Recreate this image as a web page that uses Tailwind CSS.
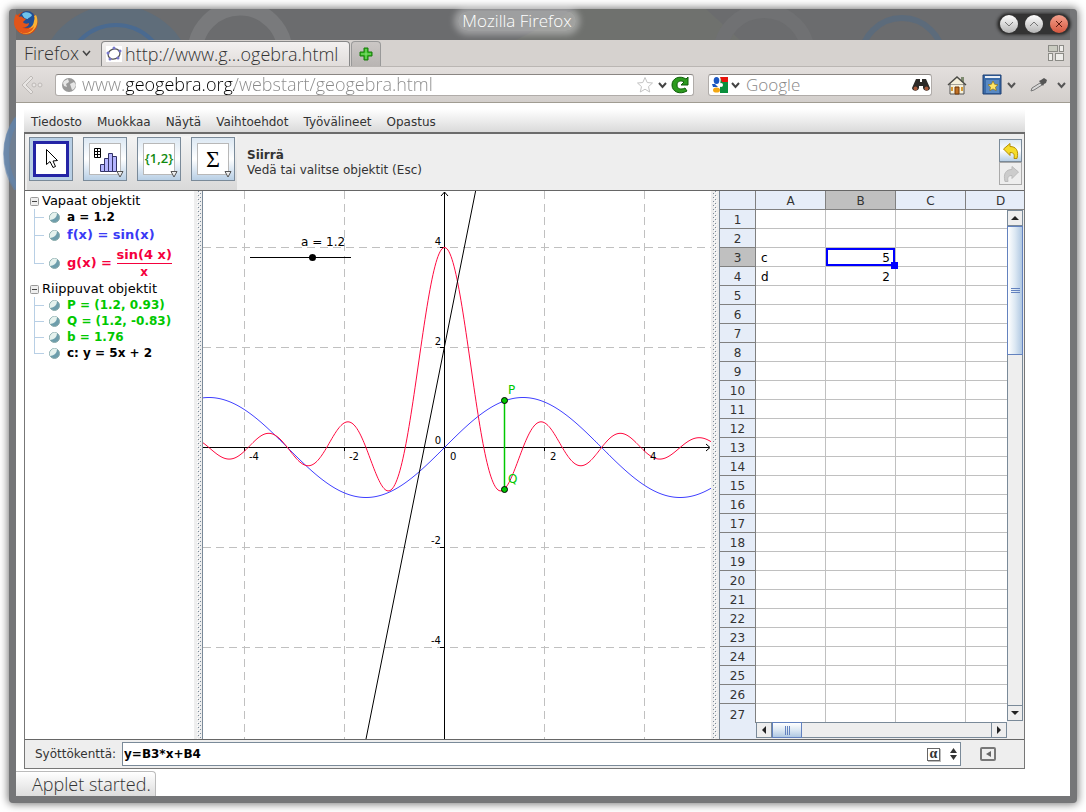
<!DOCTYPE html>
<html lang="fi">
<head>
  <meta charset="UTF-8" />
  <meta name="viewport" content="width=device-width, initial-scale=1.0" />
  <title>Mozilla Firefox</title>
  <script src="https://cdn.jsdelivr.net/npm/@tailwindcss/browser@4"></script>
</head>
<body class="bg-white h-screen p-[9px] overflow-hidden text-[#333] font-['DejaVu_Sans',sans-serif] text-[12px]">

  <div class="relative h-full flex flex-col rounded-[4px] bg-[#757678] px-[7px] pb-[7px] shadow-[0_0_8px_1px_rgba(0,0,0,0.55)]">
    <!-- Desktop ring showing through the window edge -->
    <svg class="absolute -left-[9px] top-[101px] w-4 h-20" viewBox="0 0 16 80"><path d="M16 6A62 62 0 0 0 16 80z" fill="#6f8298" opacity=".8"/><path d="M17 9A62 62 0 0 0 17 79" fill="none" stroke="#5e84b0" stroke-width="6" opacity=".6"/></svg>

    <!-- Title bar -->
    <header class="relative h-[31px] shrink-0 flex items-center justify-center pr-[52px]">
      <svg class="absolute inset-0 w-full h-full" viewBox="0 0 1054 31" preserveAspectRatio="xMinYMin slice" fill="none">
        <rect width="1054" height="31" fill="#6b6c6e"/>
        <circle cx="100" cy="74" r="78" fill="#5f6d7a"/>
        <circle cx="100" cy="66" r="50" stroke="#4a6a90" stroke-width="4"/>
        <circle cx="224" cy="44" r="45" stroke="#797a7c" stroke-width="15"/>
        <path d="M560 0h130l34 31H500z" fill="#6f716e"/>
        <circle cx="748" cy="46" r="44" stroke="#707173" stroke-width="14"/>
        <circle cx="886" cy="50" r="41" stroke="#5c6b7b" stroke-width="6"/>
      </svg>
      <!-- Firefox logo -->
      <svg class="absolute left-[-4px] top-0 w-7 h-7" viewBox="0 0 28 28">
        <circle cx="14" cy="14" r="11.500" fill="#d9480f"/>
        <circle cx="15" cy="10.500" r="8.500" fill="#1f4f96"/>
        <path d="M10 5c3-3 8-2 10 1-1 3-4 2-4 4-3 0-5-2-6-5z" fill="#6fc3ec"/>
        <path d="M24 6c3 6 1 14-6 18-5 2-10 0-12-3 7 2 15-1 16-9 .5-2 .8-3 0-5z" fill="#f9b233"/>
        <path d="M4 5l3 3c2-1 4 0 4 1l3 1-3 3c1 2 4 2 6 1 0 4-5 5-7 4 3 3 9 3 12-1-1 6-8 9-14 6C1 20 1 11 4 5z" fill="#e2551a"/>
      </svg>
      <h1 class="relative mb-2 rounded-full bg-white/35 px-1 text-[17px] leading-[20px] text-white font-light font-['Open_Sans',sans-serif] shadow-[0_0_6px_4px_rgba(255,255,255,0.35)]">Mozilla Firefox</h1>
      <div class="absolute right-0 top-[5px] flex gap-[7px] rounded-full bg-[#333] px-[2px] py-px shadow-[0_0_3px_1px_#333]">
        <button aria-label="Pienennä" class="w-[18px] h-[18px] rounded-full bg-linear-to-b from-white to-[#b5b5b5] flex items-center justify-center"><svg class="w-3 h-3" viewBox="0 0 12 12" fill="none" stroke="#777"><path d="M2 4l4 4 4-4"/></svg></button>
        <button aria-label="Suurenna" class="w-[18px] h-[18px] rounded-full bg-linear-to-b from-white to-[#b5b5b5] flex items-center justify-center"><svg class="w-3 h-3" viewBox="0 0 12 12" fill="none" stroke="#777"><path d="M2 8l4-4 4 4"/></svg></button>
        <button aria-label="Sulje" class="w-[18px] h-[18px] rounded-full bg-linear-to-b from-[#f3a08d] to-[#d4563e] flex items-center justify-center"><svg class="w-3 h-3" viewBox="0 0 12 12" fill="none" stroke="#5a1a10"><path d="M3 3l6 6M9 3l-6 6"/></svg></button>
      </div>
    </header>

    <!-- Tab strip -->
    <div class="relative h-[27px] shrink-0 flex items-end bg-[#d6d2cf] border-b border-[#bab6b3] text-[18px] text-[#333] font-light font-['Open_Sans',sans-serif]">
      <button class="w-[85px] h-[26px] pl-2 flex items-center gap-[3px]">Firefox
        <svg class="w-[9px] h-2" viewBox="0 0 9 8" fill="none" stroke="#444" stroke-width="1.500"><path d="M1 2l3.500 4L8 2"/></svg>
      </button>
      <button class="w-[249px] h-[25px] mr-px pl-1 flex items-center gap-[3px] rounded-t-[4px] border border-b-0 border-[#888] bg-linear-to-b from-[#f3f1f0] to-[#e1dddb] whitespace-nowrap overflow-hidden">
        <svg class="w-4 h-4 shrink-0 bg-white" viewBox="0 0 16 16" fill="none"><ellipse cx="8" cy="8" rx="6" ry="5" stroke="#555" stroke-width="1.300" transform="rotate(-20 8 8)"/><g fill="#77c"><circle cx="8" cy="2" r="1.500"/><circle cx="14" cy="5" r="1.500"/><circle cx="12" cy="12" r="1.500"/><circle cx="4" cy="13" r="1.500"/><circle cx="2" cy="7" r="1.500"/></g></svg>
        http://www.g…ogebra.html
      </button>
      <button aria-label="Uusi välilehti" class="w-[30px] h-[25px] flex items-center justify-center rounded-t-[4px] border border-b-0 border-[#999] bg-linear-to-b from-[#cbc7c5] to-[#b9b5b3]">
        <svg class="w-4 h-4" viewBox="0 0 16 16"><path d="M6 2h4v4h4v4h-4v4H6v-4H2V6h4z" fill="#33b81e" stroke="#187a0c"/><path d="M8 3v10M3 8h10" stroke="#8be07c"/></svg>
      </button>
      <button aria-label="Ryhmittele välilehdet" class="ml-auto mr-[5px] self-center">
        <svg class="w-[18px] h-[18px]" viewBox="0 0 18 18" fill="#eeedea" stroke="#8b8b86"><rect x="1.500" y="1.500" width="9" height="6" fill="#c9cbc0"/><rect x="12.500" y="1.500" width="4" height="6"/><rect x="1.500" y="9.500" width="4" height="7"/><rect x="8.500" y="9.500" width="8" height="7"/></svg>
      </button>
    </div>

    <!-- Navigation bar -->
    <nav class="relative h-[36px] shrink-0 flex items-center bg-linear-to-b from-[#e3dfdd] to-[#d3cfcc] border-b border-[#a09c92] font-light font-['Open_Sans',sans-serif]">
      <button aria-label="Takaisin" class="w-[39px] pl-[5px]">
        <svg class="w-6 h-5" viewBox="0 0 24 20" fill="#e8e5e3" stroke="#bdb9b6"><path d="M10 1L1 10l9 9 2-2-7-7 7-7z"/><circle cx="13" cy="10" r="2"/><circle cx="19" cy="10" r="2"/></svg>
      </button>
      <div class="flex-1 h-[22px] flex items-center rounded-[3px] border border-[#b0aca9] border-t-[#8a8683] bg-white px-1">
        <svg class="w-4 h-4 mx-px shrink-0" viewBox="0 0 16 16"><circle cx="8" cy="8" r="7" fill="#999"/><path d="M3 4l4-2 1 3-3 2 1 3-3-1-1-3zM9 7l4-2 2 3-2 4-2 1-1-3z" fill="#e6e6e6"/></svg>
        <input type="text" aria-label="Osoite" value="www.geogebra.org/webstart/geogebra.html" class="flex-1 min-w-0 ml-1 h-5 outline-none text-[18px] text-transparent bg-clip-text bg-[linear-gradient(to_right,#888_0_44px,#000_44px_152px,#888_152px)]" />
        <button aria-label="Lisää kirjanmerkki"><svg class="w-[18px] h-[18px]" viewBox="0 0 18 18" fill="none" stroke="#c4c4c4"><path d="M9 1.500l2.200 5 5.300.5-4 3.600 1.200 5.400L9 13.200 4.300 16l1.200-5.400-4-3.600 5.300-.5z"/></svg></button>
        <button aria-label="Historia" class="px-[4px]"><svg class="w-[9px] h-2" viewBox="0 0 9 8" fill="none" stroke="#444" stroke-width="2"><path d="M1 2l3.500 4L8 2"/></svg></button>
        <button aria-label="Päivitä"><svg class="w-[18px] h-[18px]" viewBox="0 0 18 18"><path d="M17 1v8h-7l3-3C10 4 6 5 6 9c0 4 4 5 8 3l2 3C9 19 1 16 1 9 1 2 9-1 15 3z" fill="#2c9a1e" stroke="#0f5c0a"/></svg></button>
      </div>
      <div class="w-[224px] h-[22px] ml-[14px] flex items-center rounded-[3px] border border-[#b0aca9] border-t-[#8a8683] bg-white pl-[3px] pr-px">
        <svg class="w-4 h-4 shrink-0" viewBox="0 0 16 16"><path d="M9 0h7v16H8V9z" fill="#0a8f3c"/><path d="M8 0h8v5H10z" fill="#e8130c"/><circle cx="9" cy="8" r="2" fill="#fff"/><ellipse cx="4.500" cy="3.500" rx="2.800" ry="3.500" fill="#1c56c0"/><path d="M0 7h3l3 3H1z" fill="#1c56c0"/><ellipse cx="4.500" cy="13" rx="3.500" ry="2.600" fill="#f3a712"/></svg>
        <button aria-label="Hakukone" class="px-[3px]"><svg class="w-[9px] h-2" viewBox="0 0 9 8" fill="none" stroke="#444" stroke-width="2"><path d="M1 2l3.500 4L8 2"/></svg></button>
        <input type="text" aria-label="Haku" placeholder="Google" class="flex-1 min-w-0 ml-[3px] h-5 outline-none text-[17px] placeholder:text-[#888]" />
        <button aria-label="Hae"><svg class="w-[18px] h-4" viewBox="0 0 18 16"><path d="M4 2h4v3h2V2h4l4 9c0 3-6 4-7 0V9H7v2c-1 4-7 3-7 0z" fill="#2c2a28"/><circle cx="3.500" cy="11.500" r="2" fill="#a5583a"/><circle cx="14.500" cy="11.500" r="2" fill="#a5583a"/></svg></button>
      </div>
      <div class="w-[138px] flex items-center pl-[15px]">
        <button aria-label="Koti"><svg class="w-5 h-5" viewBox="0 0 20 20"><path d="M14 2h3v5h-3z" fill="#7e8a70"/><path d="M3 9h14v10H3z" fill="#f5f0da" stroke="#555"/><path d="M3 9l7-6 7 6z" fill="#f5f0da"/><path d="M1 10l9-8 9 8" fill="none" stroke="#4b4b46" stroke-width="1.500"/><path d="M8 12h4v7H8z" fill="#c07023" stroke="#713b0c"/><path d="M4 12h2v4H4zM14 12h2v4h-2z" fill="#d89b35"/></svg></button>
        <button aria-label="Kirjanmerkit" class="flex items-center gap-[5px] ml-[15px]"><svg class="w-5 h-[21px]" viewBox="0 0 20 21"><path d="M1 1h18v19H1z" fill="#3a6ba8" stroke="#1c3f73"/><path d="M3 2h15v2H3z" fill="#e9eef5"/><path d="M4 6h13v13H4z" fill="#5a8ac4"/><path d="M11 7l1.600 3.300 3.400.4-2.500 2.400.7 3.500-3.200-1.700-3.200 1.700.7-3.500L6 10.700l3.400-.4z" fill="#ffe566" stroke="#8a6a00" stroke-width=".6"/></svg>
          <svg class="w-[9px] h-2" viewBox="0 0 9 8" fill="none" stroke="#555" stroke-width="2"><path d="M1 2l3.500 4L8 2"/></svg></button>
        <button aria-label="Pipetti" class="flex items-center gap-[9px] ml-[14px]"><svg class="w-[18px] h-[18px]" viewBox="0 0 18 18"><path d="M1 15l1-3 8-5 2 2-8 5z" fill="#d8d8d8" stroke="#777"/><path d="M9 5l2-1 3-2 3 2-1 3-2 1-1 2z" fill="#555"/></svg>
          <svg class="w-[9px] h-2" viewBox="0 0 9 8" fill="none" stroke="#555" stroke-width="2"><path d="M1 2l3.500 4L8 2"/></svg></button>
      </div>
    </nav>

    <!-- Page -->
    <main class="relative flex-1 min-h-0 flex flex-col bg-white pt-[6px]">
      <div class="flex-1 min-h-0 flex flex-col ml-2 mr-[45px]">

        <!-- GeoGebra menu -->
        <div class="h-[25px] shrink-0 flex items-center gap-[15px] pl-[7px] pt-[2px] bg-linear-to-b from-white to-[#dadada] border-b-2 border-[#6b6b6b]">
          <button>Tiedosto</button>
          <button>Muokkaa</button>
          <button>Näytä</button>
          <button>Vaihtoehdot</button>
          <button>Työvälineet</button>
          <button>Opastus</button>
        </div>

        <div class="flex-1 min-h-0 flex flex-col bg-[#eee] border-x border-b border-[#777]">
          <!-- Toolbar -->
          <div class="h-[57px] shrink-0 flex border-b border-[#666] pl-[2px]">
            <div class="h-[54px] mt-[2px] flex gap-[10px] px-[2px] pt-px bg-linear-to-b from-[#f4f4f4] to-[#d9d9d9]">
              <button aria-label="Siirrä" class="w-11 h-11 border border-[#7a8a99] bg-[#b8cfe5] flex items-center justify-center">
                <span class="w-9 h-9 border-3 border-[#2424a5] bg-white flex items-center justify-center">
                  <svg class="w-6 h-6" viewBox="0 0 24 24"><path d="M7.500 2.500v15l3.500-3 3 6 2.500-1-2.500-5.500 4.500-.500z" fill="#fff" stroke="#000"/></svg>
                </span>
              </button>
              <button aria-label="Taulukko" class="relative w-11 h-11 border border-[#7a8a99] bg-linear-to-b from-[#dce8f3] via-white to-[#b8cfe5] flex items-center justify-center">
                <span class="w-8 h-8 border border-[#b8b8b8] bg-white flex items-center justify-center">
                  <svg class="w-7 h-7" viewBox="0 0 28 28" fill="none"><path d="M3.500 3.500h6v9h-6zM6.500 3.500v9M3.500 6.500h6M3.500 9.500h6" stroke="#000"/><path d="M9.500 19.500h4v7h-4zM13.500 13.500h4v13h-4zM17.500 8.500h4v18h-4zM21.500 11.500h4v15h-4z" fill="#b5b5ff" stroke="#336"/></svg>
                </span>
                <svg class="absolute right-[2px] bottom-[2px] w-2 h-2" viewBox="0 0 8 8"><path d="M1 1.500h6L4 7z" fill="#eee" stroke="#555"/></svg>
              </button>
              <button aria-label="Lista" class="relative w-11 h-11 border border-[#7a8a99] bg-linear-to-b from-[#dce8f3] via-white to-[#b8cfe5] flex items-center justify-center">
                <span class="w-8 h-8 border border-[#b8b8b8] bg-white flex items-center justify-center text-[13px] font-semibold text-[#118a11] font-['Open_Sans',sans-serif]">{1,2}</span>
                <svg class="absolute right-[2px] bottom-[2px] w-2 h-2" viewBox="0 0 8 8"><path d="M1 1.500h6L4 7z" fill="#eee" stroke="#555"/></svg>
              </button>
              <button aria-label="Summa" class="relative w-11 h-11 border border-[#7a8a99] bg-linear-to-b from-[#dce8f3] via-white to-[#b8cfe5] flex items-center justify-center">
                <span class="w-8 h-8 border border-[#b8b8b8] bg-white flex items-center justify-center text-[24px] text-black font-['Liberation_Serif',serif]">Σ</span>
                <svg class="absolute right-[2px] bottom-[2px] w-2 h-2" viewBox="0 0 8 8"><path d="M1 1.500h6L4 7z" fill="#eee" stroke="#555"/></svg>
              </button>
            </div>
            <div class="ml-[10px] pt-[14px] leading-[15px]">
              <p class="font-bold">Siirrä</p>
              <p>Vedä tai valitse objektit (Esc)</p>
            </div>
            <div class="ml-auto mr-[2px] mt-[5px] flex flex-col">
              <button aria-label="Kumoa" class="w-[23px] h-[23px] border border-[#7a8a99] bg-linear-to-b from-[#dce8f3] via-white to-[#b8cfe5] flex items-center justify-center"><svg class="w-[18px] h-[18px]" viewBox="0 0 18 18"><path d="M1.500 7L8 1.500v3c6 0 9 4 7 12h-3c1-5-1-6-4-6v3z" fill="#f5dc2a" stroke="#b58f05"/></svg></button>
              <button aria-label="Tee uudelleen" class="w-[23px] h-[23px] border border-[#aaa] bg-[#eee] flex items-center justify-center"><svg class="w-[18px] h-[18px]" viewBox="0 0 18 18"><path d="M16.500 7L10 1.500v3c-6 0-9 4-7 12h3c-1-5 1-6 4-6v3z" fill="#ccc" stroke="#bbb"/></svg></button>
            </div>
          </div>

          <div class="flex-1 min-h-0 flex">
            <!-- Algebra view -->
            <section class="w-[169px] shrink-0 bg-white pl-[5px] pt-[2px] text-black" id="algebra"></section>

            <div class="w-[9px] shrink-0 border-r border-[#7a8a99]"><svg class="w-full h-full"><defs><pattern id="bumps" width="4" height="4" patternUnits="userSpaceOnUse"><path d="M0 0h1v1H0zM2 2h1v1H2z" fill="#7a8a99"/><path d="M1 1h1v1H1zM3 3h1v1H3z" fill="#fff"/></pattern></defs><rect x="3" width="4" height="100%" fill="url(#bumps)"/></svg></div>

            <!-- Graphics view -->
            <section class="flex-1 min-w-0 bg-white overflow-hidden">
              <svg class="w-full h-full" viewBox="0 0 508 548" id="graph" fill="none" font-family="DejaVu Sans, sans-serif" font-size="10">
                <path d="M41.500 0v548M141.500 0v548M341.500 0v548M441.500 0v548M0 56.500h508M0 156.500h508M0 356.500h508M0 456.500h508" stroke="#c0c0c0" stroke-dasharray="8 5"/>
                <path d="M0 256.500h506M241.500 1v547M41.500 256v4M141.500 256v4M341.500 256v4M441.500 256v4M237 56.500h4M237 156.500h4M237 356.500h4M237 456.500h4M503 253l4 3.500-4 3.500M238 5l3.500-4 3.500 4" stroke="#000"/>
                <path id="curveF" stroke="#4040ff"/>
                <path id="curveG" stroke="#ff0a40"/>
                <path d="M163 548L272.600 0" stroke="#000"/>
                <path d="M301.500 209.500v89" stroke="#00c800" stroke-width="1.500"/>
                <circle cx="301.500" cy="209.500" r="3" fill="#00c800" stroke="#000"/>
                <circle cx="301.500" cy="298.500" r="3" fill="#00c800" stroke="#000"/>
                <g fill="#00c800" font-size="12"><text x="305" y="203">P</text><text x="305" y="292">Q</text></g>
                <path d="M47 66.500h101" stroke="#000"/>
                <circle cx="109.500" cy="66.500" r="3.500" fill="#000"/>
                <text x="98" y="55" fill="#000" font-size="12">a = 1.2</text>
                <g fill="#000">
                  <text x="46" y="269">-4</text><text x="146" y="269">-2</text><text x="247" y="269">0</text><text x="347" y="269">2</text><text x="447" y="269">4</text>
                  <g text-anchor="end"><text x="238" y="54">4</text><text x="238" y="154">2</text><text x="238" y="253">0</text><text x="238" y="353">-2</text><text x="238" y="453">-4</text></g>
                </g>
              </svg>
            </section>

            <div class="w-[9px] shrink-0 border-r border-[#7a8a99]"><svg class="w-full h-full"><rect x="2" width="4" height="100%" fill="url(#bumps)"/></svg></div>

            <!-- Spreadsheet view -->
            <section class="relative w-[304px] shrink-0 overflow-hidden bg-[#e6edf8]">
              <table class="w-[316px] table-fixed border-separate border-spacing-0 leading-[16px]">
                <thead>
                  <tr class="h-[19px]">
                    <th class="w-9 p-0 border-r border-b border-[#808080]"></th>
                    <th scope="col" class="p-0 pt-[2px] font-normal border-r border-b border-[#808080]">A</th>
                    <th scope="col" class="p-0 pt-[2px] font-normal border-r border-b border-[#808080] bg-[#c0c0c0]">B</th>
                    <th scope="col" class="p-0 pt-[2px] font-normal border-r border-b border-[#808080]">C</th>
                    <th scope="col" class="p-0 pt-[2px] font-normal border-r border-b border-[#808080]">D</th>
                  </tr>
                </thead>
                <tbody id="cells"></tbody>
              </table>
              <!-- Scroll bars -->
              <div class="absolute right-0 top-[19px] bottom-0 w-[17px] bg-[#eee] flex flex-col pr-px pb-[18px]">
                <button aria-label="Vieritä ylös" class="h-4 shrink-0 border border-[#7a8a99] flex items-center justify-center"><svg class="w-2 h-1" viewBox="0 0 8 4"><path d="M0 4h8L4 0z" fill="#222"/></svg></button>
                <div class="h-[129px] border border-[#6382bf] bg-linear-to-r from-white via-[#dce8f3] to-[#b0c8e2] flex flex-col items-center justify-center gap-px">
                  <span class="w-[9px] h-px bg-[#6382bf]"></span><span class="w-[9px] h-px bg-[#6382bf]"></span><span class="w-[9px] h-px bg-[#6382bf]"></span>
                </div>
                <div class="flex-1 border-x border-[#7a8a99]"></div>
                <button aria-label="Vieritä alas" class="h-4 shrink-0 border border-[#7a8a99] flex items-center justify-center"><svg class="w-2 h-1" viewBox="0 0 8 4"><path d="M0 0h8L4 4z" fill="#222"/></svg></button>
              </div>
              <div class="absolute left-9 right-[17px] bottom-0 h-[17px] bg-[#eee] flex pb-px">
                <button aria-label="Vieritä vasemmalle" class="w-4 shrink-0 border border-[#7a8a99] flex items-center justify-center"><svg class="w-1 h-2" viewBox="0 0 4 8"><path d="M4 0v8L0 4z" fill="#222"/></svg></button>
                <div class="w-[30px] border border-[#6382bf] bg-linear-to-b from-white via-[#dce8f3] to-[#b0c8e2] flex items-center justify-center gap-px">
                  <span class="w-px h-[9px] bg-[#6382bf]"></span><span class="w-px h-[9px] bg-[#6382bf]"></span><span class="w-px h-[9px] bg-[#6382bf]"></span>
                </div>
                <div class="flex-1 border-y border-[#7a8a99]"></div>
                <button aria-label="Vieritä oikealle" class="w-4 shrink-0 border border-[#7a8a99] flex items-center justify-center"><svg class="w-1 h-2" viewBox="0 0 4 8"><path d="M0 0v8l4-4z" fill="#222"/></svg></button>
              </div>
            </section>
          </div>

          <!-- Input bar -->
          <div class="h-[29px] shrink-0 flex items-center border-t border-[#666] pl-[10px]">
            <label for="command" class="w-[87px]">Syöttökenttä:</label>
            <div class="flex-1 h-6 flex items-center border border-[#7a8a99] bg-white">
              <input type="text" id="command" value="y=B3*x+B4" class="flex-1 min-w-0 pl-px outline-none font-bold text-black" />
              <button aria-label="Symbolit" class="w-[13px] h-[13px] mr-[10px] border border-[#666] shadow-[1px_1px_0_#bbb] flex items-center justify-center text-[14px] leading-[10px] font-bold font-['Liberation_Serif',serif]">α</button>
              <button aria-label="Historia" class="mr-[3px]"><svg class="w-[7px] h-3" viewBox="0 0 7 12"><path d="M0 5h7L3.500 0zM0 7h7l-3.500 5z" fill="#333"/></svg></button>
            </div>
            <button aria-label="Komennot" class="w-4 h-[14px] ml-[19px] mr-[28px] rounded-[2px] border-2 border-[#777] flex items-center justify-center"><svg class="w-[5px] h-[6px]" viewBox="0 0 5 6"><path d="M5 0v6L0 3z" fill="#666"/></svg></button>
          </div>
        </div>
      </div>

      <!-- Status text -->
      <div class="mt-[2px] h-[25px] shrink-0 self-start flex items-center pl-4 pr-1 rounded-tr-[4px] border-t border-r border-[#bbb] bg-linear-to-b from-white to-[#ddd] text-[18px] font-light font-['Open_Sans',sans-serif]">Applet started.</div>
    </main>
  </div>

  <script>
    // Algebra view
    const groups = [
      { title: 'Vapaat objektit', items: [
        { html: 'a = 1.2', style: 'h-4 text-black' },
        { html: 'f(x) = sin(x)', style: 'h-5 text-[13px] text-[#3a3af5]' },
        { html: '<span>g(x) =&nbsp;</span><span class="flex flex-col items-center leading-[17px]"><span class="border-b border-[#f5003d]">sin(4 x)</span><span class="text-[12px]">x</span></span>', style: 'h-9 text-[13px] text-[#f5003d]' },
      ] },
      { title: 'Riippuvat objektit', items: [
        { html: 'P = (1.2, 0.93)', style: 'h-4 text-[#00c800]' },
        { html: 'Q = (1.2, -0.83)', style: 'h-4 text-[#00c800]' },
        { html: 'b = 1.76', style: 'h-4 text-[#00c800]' },
        { html: 'c: y = 5x + 2', style: 'h-4 text-black' },
      ] },
    ];

    document.getElementById('algebra').innerHTML = groups.map(group => `
      <h2 class="h-4 flex items-center gap-[3px] text-[13px]">
        <svg class="w-[9px] h-[9px]" viewBox="0 0 9 9"><rect x=".5" y=".5" width="8" height="8" rx="1" fill="#eee" stroke="#999"/><path d="M2 4.500h5" stroke="#444"/></svg>${group.title}
      </h2>
      <ul class="pl-[4px] font-bold">
        ${group.items.map((item, i) => `
          <li class="flex items-center ${item.style}">
            <span class="w-[10px] self-stretch flex flex-col">
              <span class="flex-1 border-l border-b border-[#b8cfe5]"></span>
              <span class="flex-1 ${i < group.items.length - 1 ? 'border-l border-[#b8cfe5]' : ''}"></span>
            </span>
            <svg class="w-[11px] h-[11px] ml-[5px] mr-[7px]" viewBox="0 0 11 11"><circle cx="5.500" cy="5.500" r="5" fill="#6d9dab" stroke="#8aa"/><path d="M1 7A5 5 0 0 1 8 1Q8 7 1 8z" fill="#e6f2ee"/></svg>
            ${item.html}
          </li>`).join('')}
      </ul>`).join('');

    // Function curves, 50 px per unit
    function curve(fn) {
      let d = '';
      for (let px = 0; px <= 508; px++) {
        const x = (px - 241.5) / 50;
        d += (px ? 'L' : 'M') + px + ' ' + (256.5 - 50 * fn(x)).toFixed(2);
      }
      return d;
    }
    document.getElementById('curveF').setAttribute('d', curve(Math.sin));
    document.getElementById('curveG').setAttribute('d', curve(x => x === 0 ? 4 : Math.sin(4 * x) / x));

    // Spreadsheet rows
    const values = { A3: 'c', B3: '5', A4: 'd', B4: '2' };
    let rows = '';
    for (let r = 1; r <= 27; r++) {
      rows += `<tr class="h-[19px]"><th scope="row" class="p-0 pt-[2px] font-normal border-r border-[#808080] ${r < 27 ? 'border-b' : ''} ${r === 3 ? 'bg-[#c0c0c0]' : ''}">${r}</th>`;
      for (const c of 'ABCD') {
        const text = values[c + r] || '';
        if (c + r === 'B3') {
          rows += `<td class="relative p-0 pt-[2px] px-[5px] bg-white text-black text-right border-r border-b border-[#c0c0c0]">${text}<span class="absolute inset-0 border-2 border-[#0000ff]"></span><span class="absolute -right-[3px] -bottom-[3px] w-[7px] h-[7px] bg-[#0000ff]"></span></td>`;
        } else {
          rows += `<td class="p-0 pt-[2px] px-[5px] bg-white text-black border-r border-b border-[#c0c0c0] ${c === 'B' ? 'text-right' : ''}">${text}</td>`;
        }
      }
      rows += '</tr>';
    }
    document.getElementById('cells').innerHTML = rows;
  </script>
</body>
</html>
